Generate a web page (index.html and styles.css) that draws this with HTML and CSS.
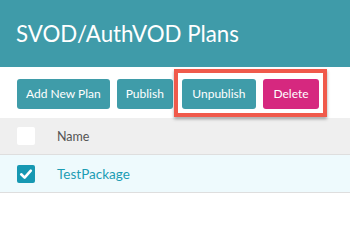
FILE: index.html
```html
<!DOCTYPE html>
<html>
<head>
<meta charset="utf-8">
<link rel="stylesheet" href="styles.css">
</head>
<body>
<header class="page-header">
  <h1 class="title">SVOD/AuthVOD Plans</h1>
</header>
<div class="toolbar">
  <button class="btn btn-add">Add New Plan</button>
  <button class="btn btn-publish">Publish</button>
  <span class="highlight">
    <button class="btn">Unpublish</button>
    <button class="btn btn-danger">Delete</button>
  </span>
</div>
<div class="table">
  <div class="row row-head">
    <span class="cell-check"><span class="checkbox"></span></span>
    <span class="cell-name">Name</span>
  </div>
  <div class="row row-selected">
    <span class="cell-check"><span class="checkbox checked"><svg viewBox="0 0 18 18" width="18" height="18"><path d="M4.2 9.3 L7.6 12.6 L13.8 5.6" fill="none" stroke="#fff" stroke-width="2.6" stroke-linecap="round" stroke-linejoin="round"/></svg></span></span>
    <span class="cell-name link">TestPackage</span>
  </div>
</div>
</body>
</html>
```
FILE: styles.css
```css
* { box-sizing: border-box; }
html, body { margin: 0; padding: 0; background: #fff; }
body { font-family: Lato, "Open Sans", sans-serif; width: 350px; height: 212px; overflow: hidden; }

.page-header {
  background: #3f9ba9;
  height: 67px;
  padding: 21px 16px 0;
}
.title {
  margin: 0;
  font-size: 22.3px;
  line-height: 26px;
  font-weight: 400;
  color: #fff;
  white-space: nowrap;
}

.toolbar {
  display: flex;
  align-items: flex-start;
  padding: 12px 17px 0;
  height: 51px;
}
.btn {
  flex: 0 0 auto;
  white-space: nowrap;
  font-family: Lato, sans-serif;
  font-size: 12px;
  color: #fff;
  background: #3f9ca9;
  border: 0;
  border-radius: 3px;
  height: 30px;
  padding: 0 10.5px;
  margin: 0 7px 0 0;
  line-height: 30px;
}
.btn-add, .btn-publish { padding: 0 9px; }
.btn-danger { background: #d6287f; margin-right: 0; }

.highlight {
  position: relative;
  display: flex;
  flex: 0 0 auto;
  margin-left: 2px;
}
.highlight::after {
  content: "";
  position: absolute;
  left: -8px;
  right: -8px;
  top: -10px;
  bottom: -8px;
  border: 4px solid #f05a4b;
  box-shadow: 0 2px 3px rgba(0,0,0,0.35);
  pointer-events: none;
}

.row {
  display: flex;
  align-items: center;
  border-bottom: 1px solid #dedede;
}
.row-head { background: #efefef; height: 37px; }
.row-selected { background: #eefafd; height: 38px; }
.cell-check { width: 57px; padding-left: 17px; display: flex; flex: 0 0 auto; }
.checkbox {
  width: 18px;
  height: 18px;
  background: #fff;
  border-radius: 2px;
  display: block;
}
.checkbox.checked { background: #1798b2; }
.checkbox svg { display: block; }
.cell-name { font-size: 12.5px; color: #555; }
.link { color: #1c9db4; font-size: 13.5px; }
```
